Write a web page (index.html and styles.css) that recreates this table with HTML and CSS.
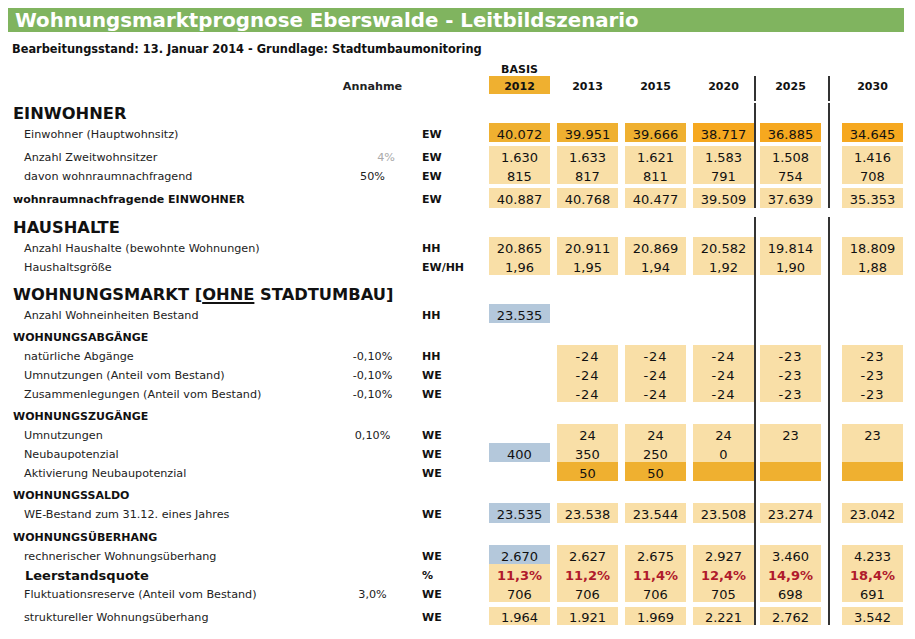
FILE: index.html
```html
<!DOCTYPE html>
<html lang="de">
<head>
<meta charset="utf-8">
<title>Wohnungsmarktprognose Eberswalde</title>
<link rel="stylesheet" href="styles.css">
</head>
<body>
<h1 class="title">Wohnungsmarktprognose Eberswalde - Leitbildszenario</h1>
<p class="sub">Bearbeitungsstand: 13. Januar 2014 - Grundlage: Stadtumbaumonitoring</p>

<div class="table">
  <div class="row basis"><div class="lab"></div><div class="ann"></div><div class="unit"></div><div class="v yh">BASIS</div><div class="v"></div><div class="v"></div><div class="v"></div><div class="v"></div><div class="v"></div></div>
  <div class="row years"><div class="lab"></div><div class="ann b">Annahme</div><div class="unit"></div><div class="v yh dk">2012</div><div class="v yh">2013</div><div class="v yh">2015</div><div class="v yh">2020</div><div class="v yh">2025</div><div class="v yh">2030</div></div>
  <div class="sp7"></div>
  <div class="brk2"></div>

  <div class="row h1r"><div class="sec">EINWOHNER</div></div>
  <div class="row r"><div class="lab in">Einwohner (Hauptwohnsitz)</div><div class="ann"></div><div class="unit">EW</div><div class="v dk">40.072</div><div class="v dk">39.951</div><div class="v dk">39.666</div><div class="v or">38.717</div><div class="v or">36.885</div><div class="v or">34.645</div></div>
  <div class="sp4"></div>
  <div class="row r"><div class="lab in">Anzahl Zweitwohnsitzer</div><div class="ann gray">4%</div><div class="unit">EW</div><div class="v lt">1.630</div><div class="v lt">1.633</div><div class="v lt">1.621</div><div class="v lt">1.583</div><div class="v lt">1.508</div><div class="v lt">1.416</div></div>
  <div class="row r"><div class="lab in">davon wohnraumnachfragend</div><div class="ann">50%</div><div class="unit">EW</div><div class="v lt">815</div><div class="v lt">817</div><div class="v lt">811</div><div class="v lt">791</div><div class="v lt">754</div><div class="v lt">708</div></div>
  <div class="sp4"></div>
  <div class="row r20"><div class="lab bl">wohnraumnachfragende EINWOHNER</div><div class="ann"></div><div class="unit">EW</div><div class="v lt">40.887</div><div class="v lt">40.768</div><div class="v lt">40.477</div><div class="v lt">39.509</div><div class="v lt">37.639</div><div class="v lt">35.353</div></div>

  <div class="brk9"></div>
  <div class="row h1r"><div class="sec">HAUSHALTE</div></div>
  <div class="row r"><div class="lab in">Anzahl Haushalte (bewohnte Wohnungen)</div><div class="ann"></div><div class="unit">HH</div><div class="v lt">20.865</div><div class="v lt">20.911</div><div class="v lt">20.869</div><div class="v lt">20.582</div><div class="v lt">19.814</div><div class="v lt">18.809</div></div>
  <div class="row r"><div class="lab in">Haushaltsgröße</div><div class="ann"></div><div class="unit">EW/HH</div><div class="v lt">1,96</div><div class="v lt">1,95</div><div class="v lt">1,94</div><div class="v lt">1,92</div><div class="v lt">1,90</div><div class="v lt">1,88</div></div>

  <div class="sp9"></div>
  <div class="row h1r"><div class="sec">WOHNUNGSMARKT [<u>OHNE</u> STADTUMBAU]</div></div>
  <div class="row r"><div class="lab in">Anzahl Wohneinheiten Bestand</div><div class="ann"></div><div class="unit">HH</div><div class="v bu">23.535</div><div class="v"></div><div class="v"></div><div class="v"></div><div class="v"></div><div class="v"></div></div>

  <div class="row h2r"><div class="sec2">WOHNUNGSABGÄNGE</div></div>
  <div class="row r"><div class="lab in">natürliche Abgänge</div><div class="ann">-0,10%</div><div class="unit">HH</div><div class="v"></div><div class="v lt neg">-24</div><div class="v lt neg">-24</div><div class="v lt neg">-24</div><div class="v lt neg">-23</div><div class="v lt neg">-23</div></div>
  <div class="row r"><div class="lab in">Umnutzungen (Anteil vom Bestand)</div><div class="ann">-0,10%</div><div class="unit">WE</div><div class="v"></div><div class="v lt neg">-24</div><div class="v lt neg">-24</div><div class="v lt neg">-24</div><div class="v lt neg">-23</div><div class="v lt neg">-23</div></div>
  <div class="row r"><div class="lab in">Zusammenlegungen (Anteil vom Bestand)</div><div class="ann">-0,10%</div><div class="unit">WE</div><div class="v"></div><div class="v lt neg">-24</div><div class="v lt neg">-24</div><div class="v lt neg">-24</div><div class="v lt neg">-23</div><div class="v lt neg">-23</div></div>

  <div class="row h2r"><div class="sec2">WOHNUNGSZUGÄNGE</div></div>
  <div class="row r"><div class="lab in">Umnutzungen</div><div class="ann">0,10%</div><div class="unit">WE</div><div class="v"></div><div class="v lt">24</div><div class="v lt">24</div><div class="v lt">24</div><div class="v lt">23</div><div class="v lt">23</div></div>
  <div class="row r"><div class="lab in">Neubaupotenzial</div><div class="ann"></div><div class="unit">WE</div><div class="v bu">400</div><div class="v lt">350</div><div class="v lt">250</div><div class="v lt">0</div><div class="v lt"></div><div class="v lt"></div></div>
  <div class="row r"><div class="lab in">Aktivierung Neubaupotenzial</div><div class="ann"></div><div class="unit">WE</div><div class="v"></div><div class="v dk">50</div><div class="v dk">50</div><div class="v dk"></div><div class="v dk"></div><div class="v dk"></div></div>

  <div class="row h2r"><div class="sec2">WOHNUNGSSALDO</div></div>
  <div class="row r20"><div class="lab in">WE-Bestand zum 31.12. eines Jahres</div><div class="ann"></div><div class="unit">WE</div><div class="v bu">23.535</div><div class="v lt">23.538</div><div class="v lt">23.544</div><div class="v lt">23.508</div><div class="v lt">23.274</div><div class="v lt">23.042</div></div>

  <div class="row h2r"><div class="sec2">WOHNUNGSÜBERHANG</div></div>
  <div class="row r"><div class="lab in">rechnerischer Wohnungsüberhang</div><div class="ann"></div><div class="unit">WE</div><div class="v bu">2.670</div><div class="v lt">2.627</div><div class="v lt">2.675</div><div class="v lt">2.927</div><div class="v lt">3.460</div><div class="v lt">4.233</div></div>
  <div class="row r"><div class="lab in big">Leerstandsquote</div><div class="ann"></div><div class="unit">%</div><div class="v lt red">11,3%</div><div class="v lt red">11,2%</div><div class="v lt red">11,4%</div><div class="v lt red">12,4%</div><div class="v lt red">14,9%</div><div class="v lt red">18,4%</div></div>
  <div class="row r"><div class="lab in">Fluktuationsreserve (Anteil vom Bestand)</div><div class="ann">3,0%</div><div class="unit">WE</div><div class="v lt">706</div><div class="v lt">706</div><div class="v lt">706</div><div class="v lt">705</div><div class="v lt">698</div><div class="v lt">691</div></div>
  <div class="sp5"></div>
  <div class="row r18"><div class="lab in">struktureller Wohnungsüberhang</div><div class="ann"></div><div class="unit">WE</div><div class="v lt">1.964</div><div class="v lt">1.921</div><div class="v lt">1.969</div><div class="v lt">2.221</div><div class="v lt">2.762</div><div class="v lt">3.542</div></div>
</div>
</body>
</html>
```

FILE: styles.css
```css
*, *::before, *::after {
  box-sizing: border-box;
}
html, body {
  margin: 0;
  padding: 0;
  background: #ffffff;
}
body {
  padding: 8px;
  font-family: "DejaVu Sans", Verdana, sans-serif;
  color: #111;
}
.title {
  margin: 0;
  width: 896px;
  height: 24px;
  background: #80b45f;
  color: #ffffff;
  font-size: 19.8px;
  font-weight: bold;
  line-height: 25px;
  padding-left: 7px;
  white-space: nowrap;
}
.sub {
  margin: 0;
  height: 28px;
  font-size: 11.4px;
  font-weight: bold;
  line-height: 14px;
  padding-top: 10px;
  padding-left: 4px;
  white-space: nowrap;
}
.table {
  width: 896px;
  background:
    linear-gradient(#333, #333) 746px 0 / 2px 100% no-repeat,
    linear-gradient(#333, #333) 820px 0 / 2px 100% no-repeat,
    #ffffff;
}
.row {
  display: flex;
  align-items: stretch;
}
.lab { width: 332px; flex: none; font-size: 11.2px; display: flex; align-items: center; white-space: nowrap; color: #222; padding-top: 3px; }
.ann { width: 65px; flex: none; font-size: 11.2px; display: flex; align-items: center; justify-content: center; color: #222; padding-top: 3px; }
.unit { width: 84px; flex: none; font-size: 11px; font-weight: bold; display: flex; align-items: center; padding-left: 17px; padding-top: 3px; }
.v {
  width: 61px;
  flex: none;
  margin-left: 7px;
  font-size: 13px;
  display: flex;
  align-items: center;
  justify-content: center;
  color: #111;
  padding-top: 3px;
}
.v:nth-child(4) { margin-left: 0; }
.v:nth-child(8) { margin-left: 6px; }
.v:nth-child(9) { margin-left: 21px; }
.neg { letter-spacing: 1px; }

.basis { height: 16px; background: #ffffff; }
.basis .yh { align-items: flex-end; padding-top: 0; }
.years { height: 18px; }
.years .v, .years .ann { padding-top: 3px; }
.yh { font-size: 11px; font-weight: bold; }
.b { font-weight: bold; }
.sp7 { height: 7px; }
.brk2 { height: 2px; background: #fff; }
.brk9 { height: 9px; background: #fff; }
.sp9 { height: 9px; }
.sp4 { height: 4px; }
.sp5 { height: 5px; }

.h1r { height: 20px; align-items: center; }
.sec { font-size: 16.3px; font-weight: bold; padding-left: 5px; white-space: nowrap; line-height: 20px; padding-top: 1px; }
.sec u { text-decoration-thickness: 2px; text-underline-offset: 2px; }
.h2r { height: 22px; align-items: flex-end; }
.sec2 { font-size: 11px; font-weight: bold; padding-left: 5px; line-height: 14px; padding-bottom: 0; }

.r { height: 19px; }
.r20 { height: 20px; }
.r18 { height: 18px; }
.in { padding-left: 16px; }
.bl { font-weight: bold; padding-left: 5px; color: #111; font-size: 11px; }
.big { font-size: 13px; font-weight: bold; color: #111; padding-left: 17px; }
.gray { color: #aaa; justify-content: flex-end; padding-right: 10px; }

.dk { background: #efb030; }
.or { background: #f6a81f; }
.lt { background: #f9dfa7; }
.bu { background: #b4c8db; }
.red { color: #b01a2c; font-weight: bold; }
```
